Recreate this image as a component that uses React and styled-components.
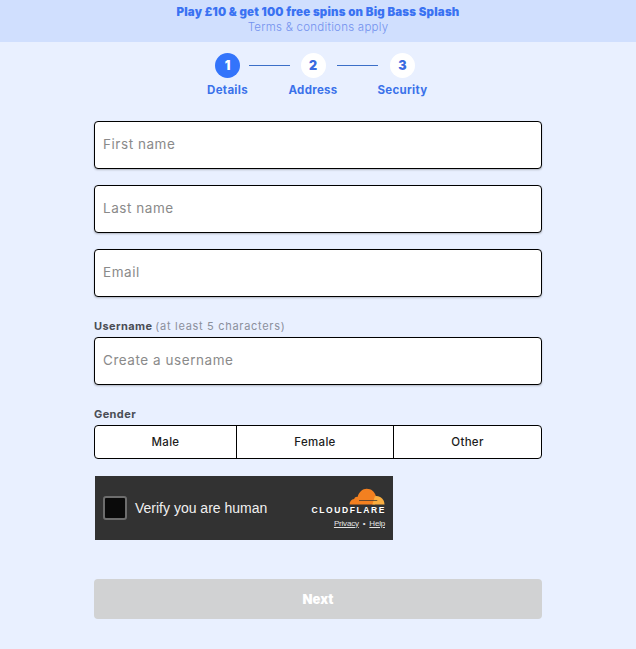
import React from "react";
import styled, { createGlobalStyle } from "styled-components";

const GlobalStyle = createGlobalStyle`
  html, body {
    margin: 0;
    padding: 0;
    background: #e9f0ff;
    font-family: Inter, "Liberation Sans", sans-serif;
  }
`;

const Page = styled.div`
  width: 636px;
  height: 649px;
  overflow: hidden;
  background: #e9f0ff;
`;

const Banner = styled.div`
  height: 42px;
  box-sizing: border-box;
  padding-top: 5px;
  background: #d0dffe;
  text-align: center;
`;

const BannerTitle = styled.div`
  font-size: 11.5px;
  line-height: 15px;
  font-weight: 900;
  letter-spacing: 0.2px;
  color: #3a72f2;
`;

const BannerSub = styled.div`
  font-size: 11.5px;
  line-height: 14px;
  font-weight: 300;
  letter-spacing: 0.25px;
  color: #7392ee;
`;

const Steps = styled.div`
  display: flex;
  justify-content: center;
  align-items: flex-start;
  height: 79px;
  padding-top: 11px;
  box-sizing: border-box;
  margin-left: -2px;
`;

const Step = styled.div`
  width: ${(p) => p.$width}px;
  display: flex;
  flex-direction: column;
  align-items: center;
`;

const Bullet = styled.div`
  width: 25px;
  height: 25px;
  border-radius: 50%;
  display: flex;
  align-items: center;
  justify-content: center;
  font-size: 12.5px;
  font-weight: 900;
  background: ${(p) => (p.$active ? "#3374fb" : "#ffffff")};
  color: ${(p) => (p.$active ? "#ffffff" : "#3a6be0")};
`;

const StepName = styled.div`
  margin-top: 5px;
  font-size: 11.5px;
  line-height: 14px;
  font-weight: 700;
  letter-spacing: 0.3px;
  color: #3b72ea;
  white-space: nowrap;
`;

const Connector = styled.div`
  width: 41px;
  height: 1px;
  margin-top: 12px;
  background: #3b6fc8;
`;

const Form = styled.form`
  width: 448px;
  margin: 0 auto;
  display: flex;
  flex-direction: column;
`;

const TextInput = styled.input`
  display: block;
  width: 100%;
  height: 48px;
  box-sizing: border-box;
  margin-bottom: ${(p) => p.$gap || 0}px;
  padding: 0 8px 2px;
  background: #fff;
  border: 1px solid #000;
  border-radius: 4px;
  box-shadow: 0 1px 2px rgba(0, 0, 0, 0.25);
  font-family: inherit;
  font-size: 13.5px;
  letter-spacing: 0.55px;
  outline: none;

  &::placeholder {
    color: #8a8a8a;
    opacity: 1;
  }
`;

const Label = styled.div`
  height: 12px;
  margin-bottom: 5px;
  font-size: 11px;
  line-height: 12px;
  font-weight: 700;
  letter-spacing: 0.4px;
  color: #4a4d55;
`;

const Hint = styled.span`
  font-weight: 400;
  letter-spacing: 0.7px;
  color: #8b8f9c;
`;

const Genders = styled.div`
  display: grid;
  grid-template-columns: 141px 157px 148px;
  height: 34px;
  box-sizing: border-box;
  background: #fff;
  border: 1px solid #000;
  border-radius: 4px;
  margin-bottom: 17px;
`;

const Gender = styled.div`
  display: flex;
  align-items: center;
  justify-content: center;
  font-size: 11.5px;
  font-weight: 500;
  letter-spacing: 0.3px;
  color: #1c1c1c;
  border-left: ${(p) => (p.$first ? "none" : "1px solid #000")};
`;

const Widget = styled.div`
  width: 298px;
  height: 64px;
  margin-left: 1px;
  box-sizing: border-box;
  padding: 0 8px;
  background: #323232;
  display: flex;
  align-items: center;
  justify-content: space-between;
  margin-bottom: 39px;
`;

const Verify = styled.div`
  display: flex;
  align-items: center;
  gap: 8px;
  font-family: "Liberation Sans", Arial, sans-serif;
  font-size: 14px;
  color: #f0f0f0;
`;

const Check = styled.div`
  width: 24px;
  height: 24px;
  box-sizing: border-box;
  border: 2px solid #6d6d6d;
  border-radius: 3px;
  background: #0a0a0a;
`;

const Brand = styled.div`
  display: flex;
  flex-direction: column;
  align-items: flex-end;
  font-family: "Liberation Sans", Arial, sans-serif;
`;

const BrandName = styled.div`
  margin-top: 1px;
  font-size: 8.5px;
  line-height: 9px;
  font-weight: 700;
  letter-spacing: 1.6px;
  margin-right: -1px;
  color: #fff;
`;

const BrandLinks = styled.div`
  margin-top: 4px;
  display: flex;
  gap: 4px;
  font-size: 8px;
  line-height: 10px;
  letter-spacing: -0.2px;
  color: #e4e4e4;

  u {
    text-underline-offset: 1px;
  }
`;

const NextButton = styled.button`
  width: 100%;
  height: 40px;
  border: none;
  border-radius: 4px;
  background: #d1d2d3;
  color: #fff;
  font-family: inherit;
  font-size: 13px;
  font-weight: 900;
`;

const steps = [
  { n: 1, name: "Details", width: 42 },
  { n: 2, name: "Address", width: 47 },
  { n: 3, name: "Security", width: 50 },
];

const Cloud = () => (
  <svg width="36" height="17" viewBox="0 0 36 17">
    <path
      d="M0.5 16.5C0.5 13.6 2.4 11.4 5.2 11 5.6 9.4 7 8.6 8.6 8.9 10 4 13.4 0.8 17.8 0.8 22.2 0.8 25.6 3.6 26.8 7.8L26 16.5Z"
      fill="#f38020"
    />
    <path
      d="M25.8 8.4C26.3 8.2 26.9 8.1 27.5 8.1 31.9 8.1 35.4 11.7 35.5 16.5H23.4Z"
      fill="#faae40"
    />
    <path d="M10 12H28.5L28 13H10Z" fill="#323232" opacity="0.7" />
  </svg>
);

const App = () => (
  <Page>
    <GlobalStyle />
    <Banner>
      <BannerTitle>Play £10 &amp; get 100 free spins on Big Bass Splash</BannerTitle>
      <BannerSub>Terms &amp; conditions apply</BannerSub>
    </Banner>
    <Steps>
      {steps.map((s, i) => (
        <React.Fragment key={s.n}>
          {i > 0 && <Connector />}
          <Step $width={s.width}>
            <Bullet $active={i === 0}>{s.n}</Bullet>
            <StepName>{s.name}</StepName>
          </Step>
        </React.Fragment>
      ))}
    </Steps>
    <Form>
      <TextInput placeholder="First name" $gap={16} />
      <TextInput placeholder="Last name" $gap={16} />
      <TextInput placeholder="Email" $gap={23} />
      <Label>
        Username <Hint>(at least 5 characters)</Hint>
      </Label>
      <TextInput placeholder="Create a username" $gap={23} />
      <Label>Gender</Label>
      <Genders>
        <Gender $first>Male</Gender>
        <Gender>Female</Gender>
        <Gender>Other</Gender>
      </Genders>
      <Widget>
        <Verify>
          <Check />
          Verify you are human
        </Verify>
        <Brand>
          <Cloud />
          <BrandName>CLOUDFLARE</BrandName>
          <BrandLinks>
            <u>Privacy</u>
            <span>•</span>
            <u>Help</u>
          </BrandLinks>
        </Brand>
      </Widget>
      <NextButton type="button">Next</NextButton>
    </Form>
  </Page>
);

export default App;
